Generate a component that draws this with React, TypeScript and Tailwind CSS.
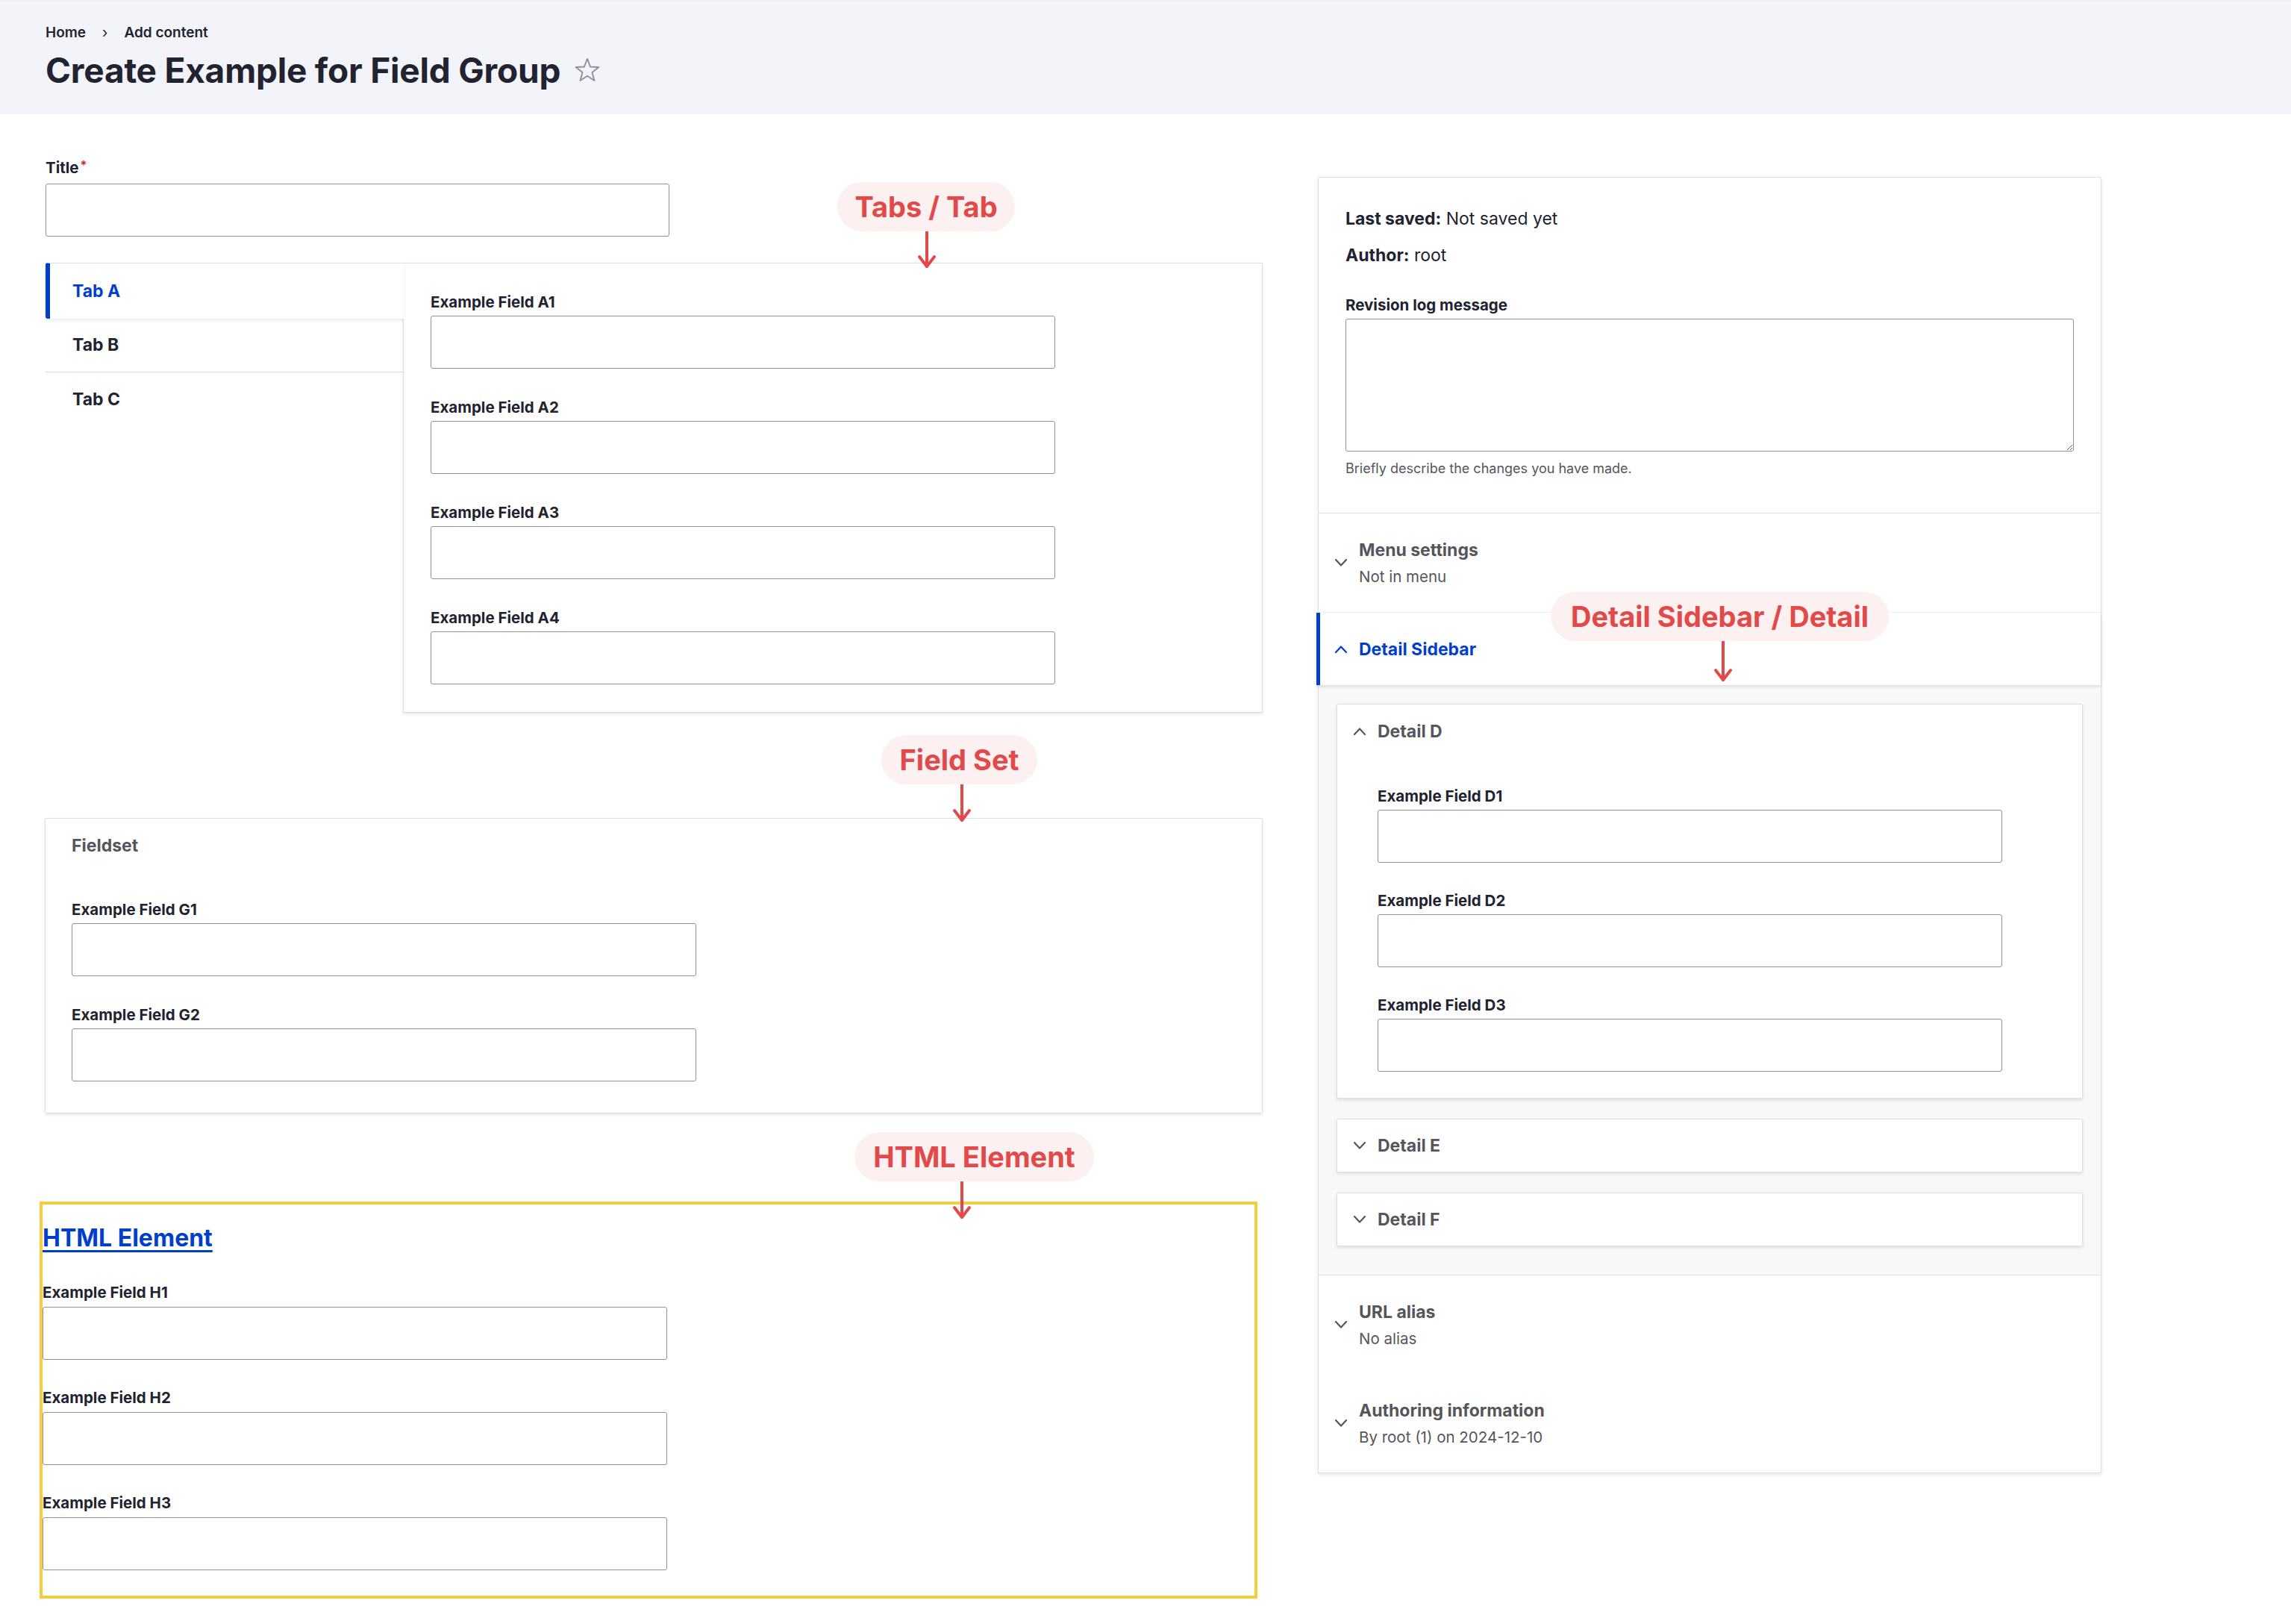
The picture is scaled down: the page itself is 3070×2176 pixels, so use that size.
import * as React from "react";

const LABEL = "block text-[20.5px] leading-[24px] font-bold text-[#222330]";
const INPUT = "block w-[837px] h-[71px] rounded-[3px] border border-[#8e929c] bg-white";
const CARD = "border border-[#dedfe4] bg-white shadow-[0_2px_4px_rgba(0,0,0,0.1)]";

function Field({ label, first }: { label: string; first?: boolean }) {
  return (
    <div className={first ? "" : "mt-[40px]"}>
      <label className={LABEL}>{label}</label>
      <input type="text" className={INPUT + " mt-[6px]"} />
    </div>
  );
}

function Chevron({ up, color = "#55565b" }: { up?: boolean; color?: string }) {
  return (
    <svg width="20" height="12" viewBox="0 0 20 12" fill="none" className="shrink-0">
      <path
        d={up ? "M3 10 L10 2.5 L17 10" : "M3 2 L10 9.5 L17 2"}
        stroke={color}
        strokeWidth="2.2"
        strokeLinecap="round"
        strokeLinejoin="round"
      />
    </svg>
  );
}

function Callout({ text, left, top, width, arrowX, arrowTo }: { text: string; left: number; top: number; width: number; arrowX: number; arrowTo: number }) {
  const arrowTop = top + 66;
  const h = arrowTo - arrowTop;
  return (
    <>
      <div
        className="absolute z-20 flex h-[66px] items-center justify-center rounded-full bg-[#fcf0f1] text-[38px] font-bold text-[#e24a4a]"
        style={{ left, top, width }}
      >
        {text}
      </div>
      <svg className="absolute z-20" style={{ left: arrowX - 14, top: arrowTop, width: 28, height: h }} viewBox={`0 0 28 ${h}`} fill="none">
        <path d={`M14 0 L14 ${h - 3}`} stroke="#e24a4a" strokeWidth="4" strokeLinecap="round" />
        <path d={`M4 ${h - 16} L14 ${h - 3} L24 ${h - 16}`} stroke="#e24a4a" strokeWidth="4" strokeLinecap="round" strokeLinejoin="round" />
      </svg>
    </>
  );
}

function SideSection({ title, summary, className = "" }: { title: string; summary: string; className?: string }) {
  return (
    <div className={"flex items-center pl-[20px] py-[35px] " + className}>
      <Chevron />
      <div className="ml-[14px]">
        <div className="text-[23px] leading-[28px] font-bold text-[#55565b]">{title}</div>
        <div className="mt-[10px] text-[20.5px] leading-[24px] text-[#55565b]">{summary}</div>
      </div>
    </div>
  );
}

function DetailClosed({ title }: { title: string }) {
  return (
    <div className={CARD + " mt-[27px] flex h-[72px] items-center rounded-[2px] pl-[20px]"}>
      <Chevron />
      <span className="ml-[14px] text-[23px] leading-[28px] font-bold text-[#55565b]">{title}</span>
    </div>
  );
}

export default function App() {
  return (
    <div className="relative min-h-[2176px] w-full bg-white font-['Inter','Noto_Sans',sans-serif] text-[#222330]">
      {/* page header */}
      <header className="h-[153px] border-t-[2px] border-[#eceef3] bg-[#f3f4f9] pl-[61px] pt-[30px]">
        <nav className="flex items-center text-[19px] leading-[24px] font-semibold text-[#222330]">
          <span>Home</span>
          <span className="mx-[22px] font-normal">›</span>
          <span>Add content</span>
        </nav>
        <div className="mt-[10px] flex items-center">
          <h1 className="text-[46px] leading-[56px] font-bold tracking-[-0.2px] text-[#222330]">Create Example for Field Group</h1>
          <svg width="38" height="38" viewBox="0 0 24 24" fill="none" className="ml-[17px]">
            <path
              d="M12 2.5 L14.6 9.2 L21.7 9.5 L16.1 13.9 L18 20.8 L12 16.9 L6 20.8 L7.9 13.9 L2.3 9.5 L9.4 9.2 Z"
              stroke="#8e929c"
              strokeWidth="1.2"
              strokeLinejoin="round"
            />
          </svg>
        </div>
      </header>

      <main className="flex items-start pl-[61px] pt-[60px]">
        {/* left column */}
        <div className="w-[1631px]">
          <label className={LABEL}>
            Title<span className="ml-[2px] align-top text-[16px] leading-[16px] text-[#dc2323]">*</span>
          </label>
          <input type="text" className="mt-[9px] block h-[71px] w-[836px] rounded-[3px] border border-[#8e929c] bg-white" />

          {/* vertical tabs */}
          <div className="mt-[35px] flex h-[603px]">
            <div className="w-[479px] shrink-0">
              <div className="relative z-10 mr-[-1px] flex h-[75px] items-center rounded-l-[3px] border-l-[6px] border-t border-l-[#003ecc] border-t-[#dedfe4] bg-white pl-[30px] shadow-[0_3px_4px_rgba(0,0,0,0.07)]">
                <span className="text-[23px] font-bold text-[#003ecc]">Tab A</span>
              </div>
              <div className="flex h-[72px] items-center border-b border-[#dedfe4] pl-[36px]">
                <span className="text-[23px] font-bold text-[#222330]">Tab B</span>
              </div>
              <div className="flex h-[73px] items-center pl-[36px]">
                <span className="text-[23px] font-bold text-[#222330]">Tab C</span>
              </div>
            </div>
            <div className={CARD + " flex-1 pl-[36px] pt-[40px]"}>
              <Field label="Example Field A1" first />
              <Field label="Example Field A2" />
              <Field label="Example Field A3" />
              <Field label="Example Field A4" />
            </div>
          </div>

          {/* fieldset */}
          <fieldset className={CARD + " mt-[141px] ml-[-1px] h-[396px] rounded-[2px] pl-[35px] pt-[22px]"}>
            <div className="text-[23px] leading-[28px] font-bold text-[#55565b]">Fieldset</div>
            <div className="mt-[60px]">
              <Field label="Example Field G1" first />
              <Field label="Example Field G2" />
            </div>
          </fieldset>

          {/* html element */}
          <div className="mt-[118px] ml-[-8px] h-[532px] w-[1632px] border-[4px] border-[#f6cd3f] pt-[25px]">
            <a href="#" className="block w-fit text-[32px] leading-[40px] font-bold text-[#003ecc] underline decoration-[3px] underline-offset-[5px]">
              HTML Element
            </a>
            <div className="mt-[41px]">
              <div>
                <label className={LABEL}>Example Field H1</label>
                <input type="text" className={INPUT + " mt-[7px]"} />
              </div>
              <div className="mt-[39px]">
                <label className={LABEL}>Example Field H2</label>
                <input type="text" className={INPUT + " mt-[7px]"} />
              </div>
              <div className="mt-[39px]">
                <label className={LABEL}>Example Field H3</label>
                <input type="text" className={INPUT + " mt-[7px]"} />
              </div>
            </div>
          </div>
        </div>

        {/* right sidebar */}
        <aside className={CARD + " ml-[74px] mt-[24px] w-[1050px] rounded-[2px]"}>
          <div className="border-b border-[#dedfe4] px-[36px] pb-[48px] pt-[41px]">
            <p className="text-[23px] leading-[28px]">
              <span className="font-bold">Last saved:</span> Not saved yet
            </p>
            <p className="mt-[21px] text-[23px] leading-[28px]">
              <span className="font-bold">Author:</span> root
            </p>
            <label className={LABEL + " mt-[41px]"}>Revision log message</label>
            <textarea className="mt-[6px] block h-[178px] w-full resize-y rounded-[3px] border border-[#8e929c] bg-white" />
            <p className="mt-[12px] text-[18px] leading-[22px] text-[#55565b]">Briefly describe the changes you have made.</p>
          </div>

          <SideSection title="Menu settings" summary="Not in menu" className="border-b border-[#f0f1f4]" />

          {/* open sidebar detail */}
          <div className="relative z-10 ml-[-3px] flex h-[97px] items-center border-l-[5px] border-[#003ecc] bg-white pl-[18px] shadow-[0_2px_4px_rgba(0,0,0,0.12)]">
            <Chevron up color="#003ecc" />
            <span className="ml-[14px] text-[23px] leading-[28px] font-bold text-[#003ecc]">Detail Sidebar</span>
          </div>
          <div className="border-b border-[#dedfe4] bg-[#f7f8fa] px-[24px] pb-[38px] pt-[25px]">
            <div className={CARD + " rounded-[2px] pb-[35px] pt-[22px]"}>
              <div className="flex items-center pl-[20px]">
                <Chevron up />
                <span className="ml-[14px] text-[23px] leading-[28px] font-bold text-[#55565b]">Detail D</span>
              </div>
              <div className="mt-[61px] pl-[54px]">
                <Field label="Example Field D1" first />
                <div className="mt-[39px]">
                  <label className={LABEL}>Example Field D2</label>
                  <input type="text" className={INPUT + " mt-[6px]"} />
                </div>
                <div className="mt-[39px]">
                  <label className={LABEL}>Example Field D3</label>
                  <input type="text" className={INPUT + " mt-[6px]"} />
                </div>
              </div>
            </div>
            <DetailClosed title="Detail E" />
            <DetailClosed title="Detail F" />
          </div>

          <SideSection title="URL alias" summary="No alias" />
          <SideSection title="Authoring information" summary="By root (1) on 2024-12-10" />
        </aside>
      </main>

      {/* annotations */}
      <Callout text="Tabs / Tab" left={1122} top={244} width={238} arrowX={1242} arrowTo={360} />
      <Callout text="Field Set" left={1181} top={985} width={209} arrowX={1289} arrowTo={1102} />
      <Callout text="HTML Element" left={1145} top={1517} width={321} arrowX={1289} arrowTo={1634} />
      <Callout text="Detail Sidebar / Detail" left={2078} top={793} width={453} arrowX={2309} arrowTo={914} />
    </div>
  );
}
